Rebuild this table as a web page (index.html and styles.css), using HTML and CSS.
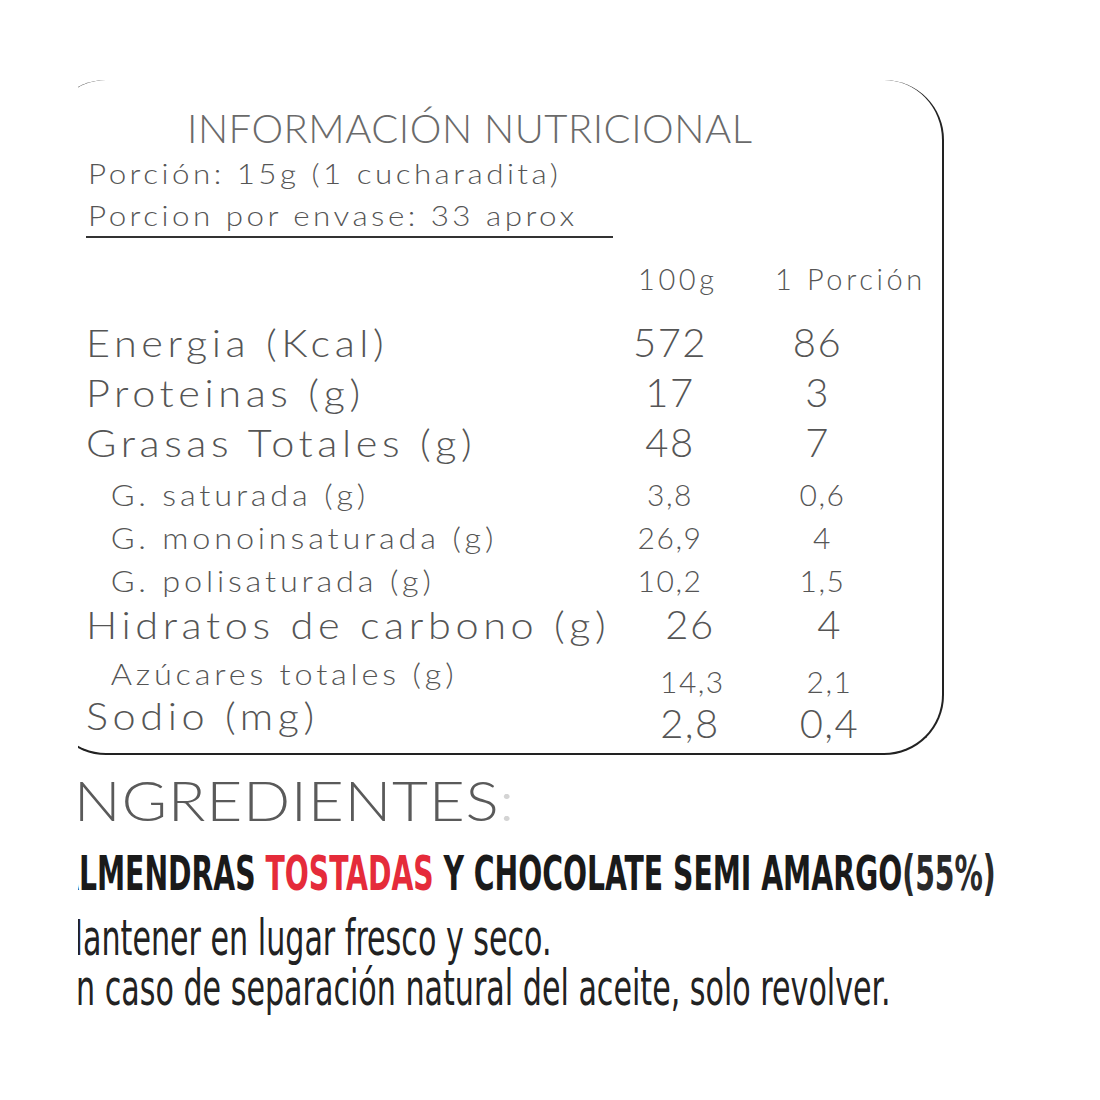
FILE: index.html
```html
<!DOCTYPE html>
<html lang="es">
<head>
<meta charset="utf-8">
<title>Información nutricional</title>
<link rel="stylesheet" href="styles.css">
</head>
<body>
<div class="frame">
  <section class="label">
    <h1 class="title">INFORMACIÓN NUTRICIONAL</h1>
    <div class="serving">
      <div class="sv">Porción: 15g (1 cucharadita)</div>
      <div class="sv">Porcion por envase: 33 aprox</div>
    </div>
    <div class="row head">
      <div></div>
      <div class="c1">100g</div>
      <div class="c2">1 Porción</div>
    </div>
    <div class="row big">
      <div class="name">Energia (Kcal)</div>
      <div class="v">572</div>
      <div class="v">86</div>
    </div>
    <div class="row big">
      <div class="name">Proteinas (g)</div>
      <div class="v">17</div>
      <div class="v">3</div>
    </div>
    <div class="row big after-big">
      <div class="name">Grasas Totales (g)</div>
      <div class="v">48</div>
      <div class="v">7</div>
    </div>
    <div class="row small">
      <div class="name">G. saturada (g)</div>
      <div class="v">3,8</div>
      <div class="v">0,6</div>
    </div>
    <div class="row small">
      <div class="name">G. monoinsaturada (g)</div>
      <div class="v">26,9</div>
      <div class="v">4</div>
    </div>
    <div class="row small last-small">
      <div class="name">G. polisaturada (g)</div>
      <div class="v">10,2</div>
      <div class="v">1,5</div>
    </div>
    <div class="row big shift carb">
      <div class="name">Hidratos de carbono (g)</div>
      <div class="v">26</div>
      <div class="v">4</div>
    </div>
    <div class="row small shift sugar">
      <div class="name">Azúcares totales (g)</div>
      <div class="v"><span class="low">14,3</span></div>
      <div class="v"><span class="low">2,1</span></div>
    </div>
    <div class="row big shift">
      <div class="name">Sodio (mg)</div>
      <div class="v"><span class="low">2,8</span></div>
      <div class="v"><span class="low">0,4</span></div>
    </div>
  </section>

  <section class="ingredients">
    <h2 class="ing-title">INGREDIENTES<span class="colon">:</span></h2>
    <p class="ing-list">ALMENDRAS <span class="red">TOSTADAS</span> Y CHOCOLATE SEMI AMARGO<span class="pct">(55%)</span></p>
    <p class="note">Mantener en lugar fresco y seco.</p>
    <p class="note">En caso de separación natural del aceite, solo revolver.</p>
  </section>
</div>
</body>
</html>
```

FILE: styles.css
```css
html, body {
  margin: 0;
  padding: 0;
  background: #ffffff;
}

.frame {
  margin-left: 78px;
  width: 1022px;
  height: 1100px;
  padding-top: 80px;
  box-sizing: border-box;
  overflow: hidden;
}

/* ---------- nutrition box ---------- */
.label {
  margin-left: -32px;
  width: 898px;
  height: 675px;
  box-sizing: border-box;
  border: 2.5px solid #222;
  border-top-width: 0;
  border-radius: 60px;
  padding: 24px 0 0 38px;
  font-family: "Lato", "Open Sans", sans-serif;
  font-weight: 300;
  color: #555;
}

.title {
  margin: 0 0 0 101px;
  font-size: 40px;
  font-weight: 300;
  line-height: 48px;
  letter-spacing: 0.5px;
  color: #6a6a6a;
  white-space: nowrap;
}

.serving {
  width: 527px;
  border-bottom: 2px solid #333;
  font-size: 28px;
  line-height: 42px;
  padding-left: 2px;
  box-sizing: border-box;
  white-space: nowrap;
}
.sv {
  letter-spacing: 3.1px;
  transform: scaleX(1.12);
  transform-origin: left center;
}

.row {
  display: grid;
  grid-template-columns: 534px 100px 205px;
  align-items: baseline;
  white-space: nowrap;
}

.row .name {
  transform: scaleX(1.12);
  transform-origin: left center;
}

.row .v {
  text-align: center;
  letter-spacing: 1.5px;
}

.head {
  margin-top: 12px;
  height: 67px;
  font-size: 29px;
  line-height: 58px;
  letter-spacing: 3.6px;
}
.head .c1 { padding-left: 18px; }
.head .c2 { padding-left: 55px; }

.big {
  height: 50px;
  line-height: 50px;
}
.big .name { font-size: 37px; letter-spacing: 4.1px; }
.big .v { font-size: 40px; }

.small {
  height: 43px;
  line-height: 42px;
}
.small .name { font-size: 29px; padding-left: 22px; letter-spacing: 3.4px; }
.small .v { font-size: 30px; }

.after-big { height: 56px; }
.last-small { height: 40px; }
.carb { height: 53px; }
.sugar { height: 38px; }

.big .v:nth-child(3) { padding-right: 10px; }
.shift .v:nth-child(2) { padding-left: 40px; }
.shift .v:nth-child(3) { padding-left: 14px; padding-right: 0; }

.low {
  vertical-align: -8px;
}

/* ---------- ingredients ---------- */
.ingredients {
  margin-left: -21px;
}

.ing-title {
  margin: 15px 0 0;
  font-family: "Lato", "Open Sans", sans-serif;
  font-weight: 300;
  font-size: 56px;
  line-height: 60px;
  letter-spacing: 0.6px;
  color: #5a5a5a;
  white-space: nowrap;
  transform: scaleX(1.11);
  transform-origin: left center;
}
.colon { color: #d4d4d4; }

.ing-list {
  margin: 18px 0 0;
  font-family: "Liberation Sans Narrow", "DejaVu Sans Condensed", sans-serif;
  font-weight: 700;
  font-size: 48px;
  line-height: 50px;
  color: #1a1a1a;
  white-space: nowrap;
  transform: scaleX(0.655);
  transform-origin: left center;
}
.red { color: #e52b3a; }
.pct { color: #2a2a2a; }

.note {
  margin: 0;
  font-family: "Liberation Sans Narrow", "DejaVu Sans Condensed", sans-serif;
  font-weight: 400;
  font-size: 50px;
  line-height: 50px;
  color: #222;
  white-space: nowrap;
  transform: scaleX(0.67);
  transform-origin: left center;
}
.ing-list + .note { margin-top: 15px; }
```
